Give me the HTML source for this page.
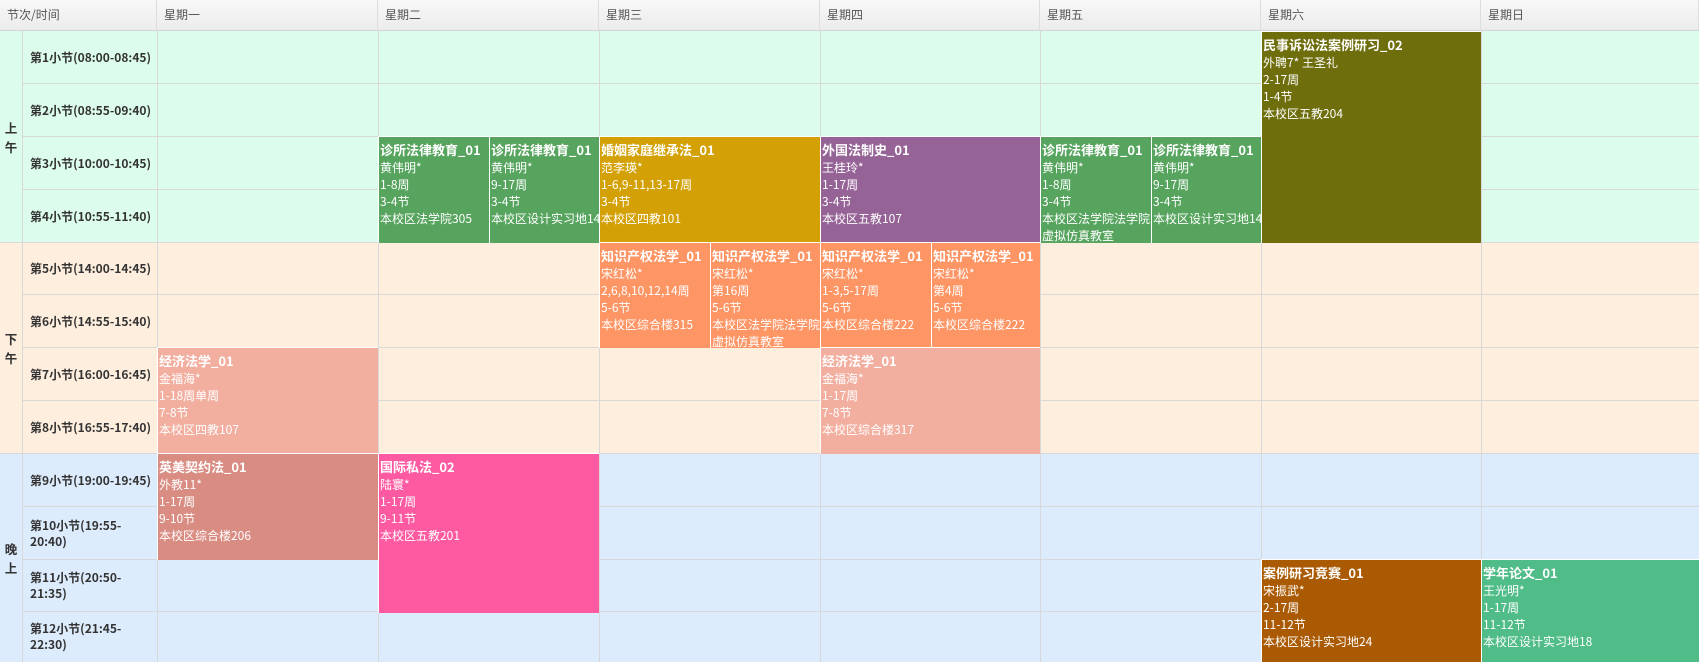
<!DOCTYPE html>
<html><head><meta charset="utf-8">
<style>
*{margin:0;padding:0;box-sizing:border-box}
body{width:1699px;height:662px;overflow:hidden;background:#fff;font-family:"Noto Sans CJK SC","Liberation Sans",sans-serif;position:relative}
.a{position:absolute}
.hd{top:0;height:31px;background:linear-gradient(#f8f8f8,#ececec);border-right:1px solid #ddd;border-bottom:1px solid #d4d4d4;font-size:12px;color:#555;line-height:30px;padding-left:7px}
.hl{height:1px;background:#d8d8d8;left:22px;right:0}
.vl{width:1px;background:#d8d8d8;top:31px;height:631px}
.lab{left:22px;width:135px;font-size:12px;font-weight:bold;color:#333;display:flex;align-items:center;padding-left:8px;line-height:16px}
.sec{left:0;width:22px;font-size:12.5px;font-weight:bold;color:#333;display:flex;align-items:center;justify-content:center;text-align:center;line-height:19px}
.c{color:#fff;font-size:12px;line-height:17px;padding:3px 0 0 1px;overflow:hidden;border-left:1px solid #fff;border-top:1px solid #fff;white-space:nowrap}
.c b{font-size:13px;display:block;line-height:19px}
</style></head><body>
<div class="a" style="top:31px;left:0;width:1699px;height:211px;background:#ddfdec"></div>
<div class="a" style="top:242px;left:0;width:1699px;height:211px;background:#feeede"></div>
<div class="a" style="top:453px;left:0;width:1699px;height:209px;background:#ddecfd"></div>
<div class="a hd" style="left:0;width:157px">节次/时间</div>
<div class="a hd" style="left:157px;width:221px">星期一</div>
<div class="a hd" style="left:378px;width:221px">星期二</div>
<div class="a hd" style="left:599px;width:221px">星期三</div>
<div class="a hd" style="left:820px;width:220px">星期四</div>
<div class="a hd" style="left:1040px;width:221px">星期五</div>
<div class="a hd" style="left:1261px;width:220px">星期六</div>
<div class="a hd" style="left:1481px;width:218px">星期日</div>
<div class="a hl" style="top:83px"></div><div class="a hl" style="top:136px"></div><div class="a hl" style="top:189px"></div>
<div class="a" style="top:242px;left:0;right:0;height:1px;background:#d8d8d8"></div>
<div class="a hl" style="top:294px"></div><div class="a hl" style="top:347px"></div><div class="a hl" style="top:400px"></div>
<div class="a" style="top:453px;left:0;right:0;height:1px;background:#d8d8d8"></div>
<div class="a hl" style="top:506px"></div><div class="a hl" style="top:559px"></div><div class="a hl" style="top:611px"></div>
<div class="a vl" style="left:22px"></div><div class="a vl" style="left:157px"></div><div class="a vl" style="left:378px"></div>
<div class="a vl" style="left:599px"></div><div class="a vl" style="left:820px"></div><div class="a vl" style="left:1040px"></div>
<div class="a vl" style="left:1261px"></div><div class="a vl" style="left:1481px"></div>
<div class="a sec" style="top:31px;height:211px">上<br>午</div>
<div class="a sec" style="top:242px;height:211px">下<br>午</div>
<div class="a sec" style="top:453px;height:209px">晚<br>上</div>
<div class="a lab" style="top:31px;height:53px">第1小节(08:00-08:45)</div>
<div class="a lab" style="top:84px;height:53px">第2小节(08:55-09:40)</div>
<div class="a lab" style="top:137px;height:53px">第3小节(10:00-10:45)</div>
<div class="a lab" style="top:190px;height:53px">第4小节(10:55-11:40)</div>
<div class="a lab" style="top:243px;height:52px">第5小节(14:00-14:45)</div>
<div class="a lab" style="top:295px;height:53px">第6小节(14:55-15:40)</div>
<div class="a lab" style="top:348px;height:53px">第7小节(16:00-16:45)</div>
<div class="a lab" style="top:401px;height:53px">第8小节(16:55-17:40)</div>
<div class="a lab" style="top:454px;height:53px">第9小节(19:00-19:45)</div>
<div class="a lab" style="top:507px;height:53px">第10小节(19:55-<br>20:40)</div>
<div class="a lab" style="top:560px;height:52px">第11小节(20:50-<br>21:35)</div>
<div class="a lab" style="top:612px;height:50px">第12小节(21:45-<br>22:30)</div>
<div class="a c" style="left:1261px;top:31px;width:220px;height:212px;background:#6f6e0d"><b>民事诉讼法案例研习_02</b>外聘7* 王圣礼<br>2-17周<br>1-4节<br>本校区五教204</div>
<div class="a c" style="left:378px;top:136px;width:111px;height:107px;background:#56a45e"><b>诊所法律教育_01</b>黄伟明*<br>1-8周<br>3-4节<br>本校区法学院305</div>
<div class="a c" style="left:489px;top:136px;width:110px;height:107px;background:#56a45e"><b>诊所法律教育_01</b>黄伟明*<br>9-17周<br>3-4节<br>本校区设计实习地14</div>
<div class="a c" style="left:599px;top:136px;width:221px;height:107px;background:#d3a105"><b>婚姻家庭继承法_01</b>范李瑛*<br>1-6,9-11,13-17周<br>3-4节<br>本校区四教101</div>
<div class="a c" style="left:820px;top:136px;width:220px;height:107px;background:#966397"><b>外国法制史_01</b>王桂玲*<br>1-17周<br>3-4节<br>本校区五教107</div>
<div class="a c" style="left:1040px;top:136px;width:111px;height:107px;background:#56a45e"><b>诊所法律教育_01</b>黄伟明*<br>1-8周<br>3-4节<br>本校区法学院法学院<br>虚拟仿真教室</div>
<div class="a c" style="left:1151px;top:136px;width:110px;height:107px;background:#56a45e"><b>诊所法律教育_01</b>黄伟明*<br>9-17周<br>3-4节<br>本校区设计实习地14</div>
<div class="a c" style="left:599px;top:242px;width:111px;height:106px;background:#fe9565"><b>知识产权法学_01</b>宋红松*<br>2,6,8,10,12,14周<br>5-6节<br>本校区综合楼315</div>
<div class="a c" style="left:710px;top:242px;width:110px;height:106px;background:#fe9565"><b>知识产权法学_01</b>宋红松*<br>第16周<br>5-6节<br>本校区法学院法学院<br>虚拟仿真教室</div>
<div class="a c" style="left:820px;top:242px;width:111px;height:106px;background:#fe9565"><b>知识产权法学_01</b>宋红松*<br>1-3,5-17周<br>5-6节<br>本校区综合楼222</div>
<div class="a c" style="left:931px;top:242px;width:109px;height:106px;background:#fe9565"><b>知识产权法学_01</b>宋红松*<br>第4周<br>5-6节<br>本校区综合楼222</div>
<div class="a c" style="left:157px;top:347px;width:221px;height:107px;background:#f2afa0"><b>经济法学_01</b>金福海*<br>1-18周单周<br>7-8节<br>本校区四教107</div>
<div class="a c" style="left:820px;top:347px;width:220px;height:107px;background:#f2afa0"><b>经济法学_01</b>金福海*<br>1-17周<br>7-8节<br>本校区综合楼317</div>
<div class="a c" style="left:157px;top:453px;width:221px;height:107px;background:#d98c82"><b>英美契约法_01</b>外教11*<br>1-17周<br>9-10节<br>本校区综合楼206</div>
<div class="a c" style="left:378px;top:453px;width:221px;height:160px;background:#fd5aa1"><b>国际私法_02</b>陆寰*<br>1-17周<br>9-11节<br>本校区五教201</div>
<div class="a c" style="left:1261px;top:559px;width:220px;height:103px;background:#aa5a03"><b>案例研习竞赛_01</b>宋振武*<br>2-17周<br>11-12节<br>本校区设计实习地24</div>
<div class="a c" style="left:1481px;top:559px;width:218px;height:103px;background:#50bc88"><b>学年论文_01</b>王光明*<br>1-17周<br>11-12节<br>本校区设计实习地18</div>
</body></html>
